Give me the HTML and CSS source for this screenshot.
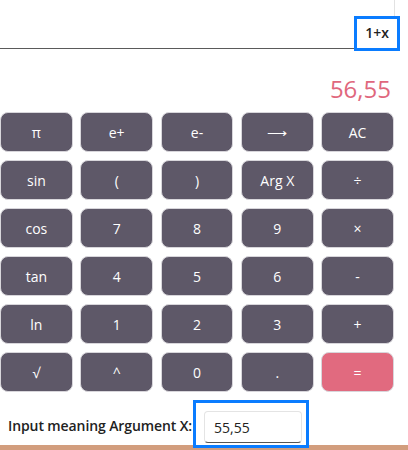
FILE: index.html
```html
<!DOCTYPE html>
<html lang="en">
<head>
    <meta charset="UTF-8">
    <meta name="viewport" content="width=device-width, initial-scale=1.0">
    <title>Calculator</title>
    <link rel="stylesheet" href="styles.css">
</head>
<body>

    <div class="calc">
        <div class="expr">
            <span class="expr-text">1+x</span>
        </div>
        <div class="result">56,55</div>

        <div class="keys">
            <button class="key">π</button>
            <button class="key">e+</button>
            <button class="key">e-</button>
            <button class="key">⟶</button>
            <button class="key">AC</button>

            <button class="key">sin</button>
            <button class="key">(</button>
            <button class="key">)</button>
            <button class="key">Arg X</button>
            <button class="key">÷</button>

            <button class="key">cos</button>
            <button class="key">7</button>
            <button class="key">8</button>
            <button class="key">9</button>
            <button class="key">×</button>

            <button class="key">tan</button>
            <button class="key">4</button>
            <button class="key">5</button>
            <button class="key">6</button>
            <button class="key">-</button>

            <button class="key">ln</button>
            <button class="key">1</button>
            <button class="key">2</button>
            <button class="key">3</button>
            <button class="key">+</button>

            <button class="key">√</button>
            <button class="key">^</button>
            <button class="key">0</button>
            <button class="key">.</button>
            <button class="key key-equals">=</button>
        </div>

        <div class="arg-row">
            <label class="arg-label" for="argx">Input meaning Argument X:</label>
            <span class="arg-wrap"><input id="argx" class="arg-input" type="text" value="55,55"></span>
        </div>
    </div>

    <div class="footer-bar"></div>

</body>
</html>
```

FILE: styles.css
```css
body {
    font-family: 'Open Sans', 'Noto Sans', sans-serif;
    margin: 0;
    padding: 0;
    background-color: #fff;
    color: #222;
}
.calc {
    width: 395px;
}

/* expression line */
.expr {
    height: 48px;
    border-bottom: 1px solid #5a5a5a;
    border-right: 1px solid #e2e2e2;
    display: flex;
    justify-content: flex-end;
    align-items: flex-end;
}
.expr-text {
    background-color: #fff;
    border: 3px solid #0a7cff;
    padding: 0 8px;
    height: 29px;
    line-height: 27px;
    font-size: 14px;
    font-weight: 600;
    color: #222;
    margin-right: -6px;
    margin-bottom: -3px;
}

.result {
    margin-top: 24px;
    padding-right: 4px;
    text-align: right;
    font-size: 24px;
    line-height: 32px;
    color: #e0677d;
}

/* keypad */
.keys {
    margin-top: 7px;
    display: grid;
    grid-template-columns: repeat(5, 1fr);
    grid-auto-rows: 40px;
    gap: 8px 7.5px;
    width: 394px;
}
.key {
    font-family: 'Open Sans', 'Noto Sans', sans-serif;
    font-size: 14px;
    color: #fff;
    background-color: #5e5868;
    border: 1px solid #d8d6db;
    border-radius: 8px;
    padding: 0;
    cursor: pointer;
}
.key-equals {
    background-color: #e16a7f;
}

/* argument input */
.arg-row {
    margin-top: 8px;
    display: flex;
    align-items: center;
}
.arg-label {
    padding-left: 8px;
    margin-top: 6px;
    font-size: 14px;
    font-weight: 600;
    letter-spacing: -0.1px;
    color: #222;
}
.arg-wrap {
    position: relative;
    z-index: 1;
    display: block;
    border: 3px solid #0a7cff;
    padding: 8px 4px 2px 8px;
    margin-left: 1px;
    margin-bottom: -3px;
}
.arg-input {
    display: block;
    box-sizing: border-box;
    width: 98px;
    height: 32px;
    font-family: 'Open Sans', 'Noto Sans', sans-serif;
    font-size: 14px;
    color: #222;
    padding: 0 9px;
    border: 1px solid #e4e4e4;
    border-bottom-color: #555;
    border-radius: 4px;
    outline: none;
}

.footer-bar {
    height: 8px;
    background-color: #d29d7d;
}
```
